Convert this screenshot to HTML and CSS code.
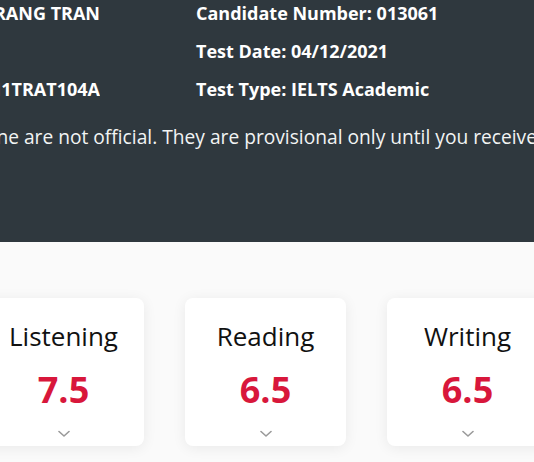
FILE: index.html
```html
<!DOCTYPE html>
<html>
<head>
<meta charset="utf-8">
<link rel="stylesheet" href="styles.css">
</head>
<body>
<div class="page">
  <header class="hero">
    <div class="details">
      <div class="col col-left">
        <div class="row">TRANG TRAN</div>
        <div class="row"></div>
        <div class="row">TRANGTRAN1TRAT104A</div>
      </div>
      <div class="col col-right">
        <div class="row">Candidate Number: 013061</div>
        <div class="row">Test Date: 04/12/2021</div>
        <div class="row">Test Type: IELTS Academic</div>
      </div>
    </div>
    <p class="notice">Results shown online are not official. They are provisional only until you receive your Test Report Form.</p>
  </header>
  <section class="scores">
    <div class="card">
      <div class="skill">Listening</div>
      <div class="band">7.5</div>
      <svg class="chev" width="12" height="8" viewBox="0 0 12 8"><path d="M1 1.5 L6 6 L11 1.5" fill="none" stroke="#9a9a9a" stroke-width="1.6" stroke-linecap="round" stroke-linejoin="round"/></svg>
    </div>
    <div class="card">
      <div class="skill">Reading</div>
      <div class="band">6.5</div>
      <svg class="chev" width="12" height="8" viewBox="0 0 12 8"><path d="M1 1.5 L6 6 L11 1.5" fill="none" stroke="#9a9a9a" stroke-width="1.6" stroke-linecap="round" stroke-linejoin="round"/></svg>
    </div>
    <div class="card">
      <div class="skill">Writing</div>
      <div class="band">6.5</div>
      <svg class="chev" width="12" height="8" viewBox="0 0 12 8"><path d="M1 1.5 L6 6 L11 1.5" fill="none" stroke="#9a9a9a" stroke-width="1.6" stroke-linecap="round" stroke-linejoin="round"/></svg>
    </div>
  </section>
</div>
</body>
</html>
```

FILE: styles.css
```css
html, body {
  margin: 0;
  padding: 0;
  overflow: hidden;
  background: #fafafa;
  font-family: "Open Sans", "Lato", sans-serif;
}
.page {
  width: 534px;
  height: 462px;
  overflow: hidden;
}
.hero {
  background: #2f383e;
  height: 242px;
  padding-top: 1px;
  box-sizing: border-box;
  color: #ffffff;
  white-space: nowrap;
}
.details {
  display: flex;
  margin-left: -120px;
}
.col {
  display: flex;
  flex-direction: column;
  gap: 14px;
}
.col-left {
  width: 220px;
  text-align: right;
  overflow: hidden;
  direction: rtl;
}
.col-right {
  margin-left: 96px;
}
.row {
  height: 24px;
  line-height: 24px;
  font-weight: 700;
  font-size: 18px;
  direction: ltr;
  unicode-bidi: isolate;
}
.notice {
  margin: 24px 0 0 -170px;
  line-height: 24px;
  font-size: 19.2px;
  color: #f2f4f4;
}
.scores {
  display: flex;
  gap: 41px;
  margin-left: -17px;
  padding-top: 56px;
}
.card {
  flex: 0 0 161px;
  height: 148px;
  background: #ffffff;
  border-radius: 8px;
  box-shadow: 0 2px 14px rgba(0, 0, 0, 0.07);
  display: flex;
  flex-direction: column;
  align-items: center;
}
.skill {
  margin-top: 22px;
  font-size: 26px;
  line-height: 32px;
  color: #111111;
}
.band {
  margin-top: 18px;
  font-size: 36px;
  line-height: 40px;
  font-weight: 700;
  color: #d8173b;
}
.chev {
  margin-top: 20px;
}
```
